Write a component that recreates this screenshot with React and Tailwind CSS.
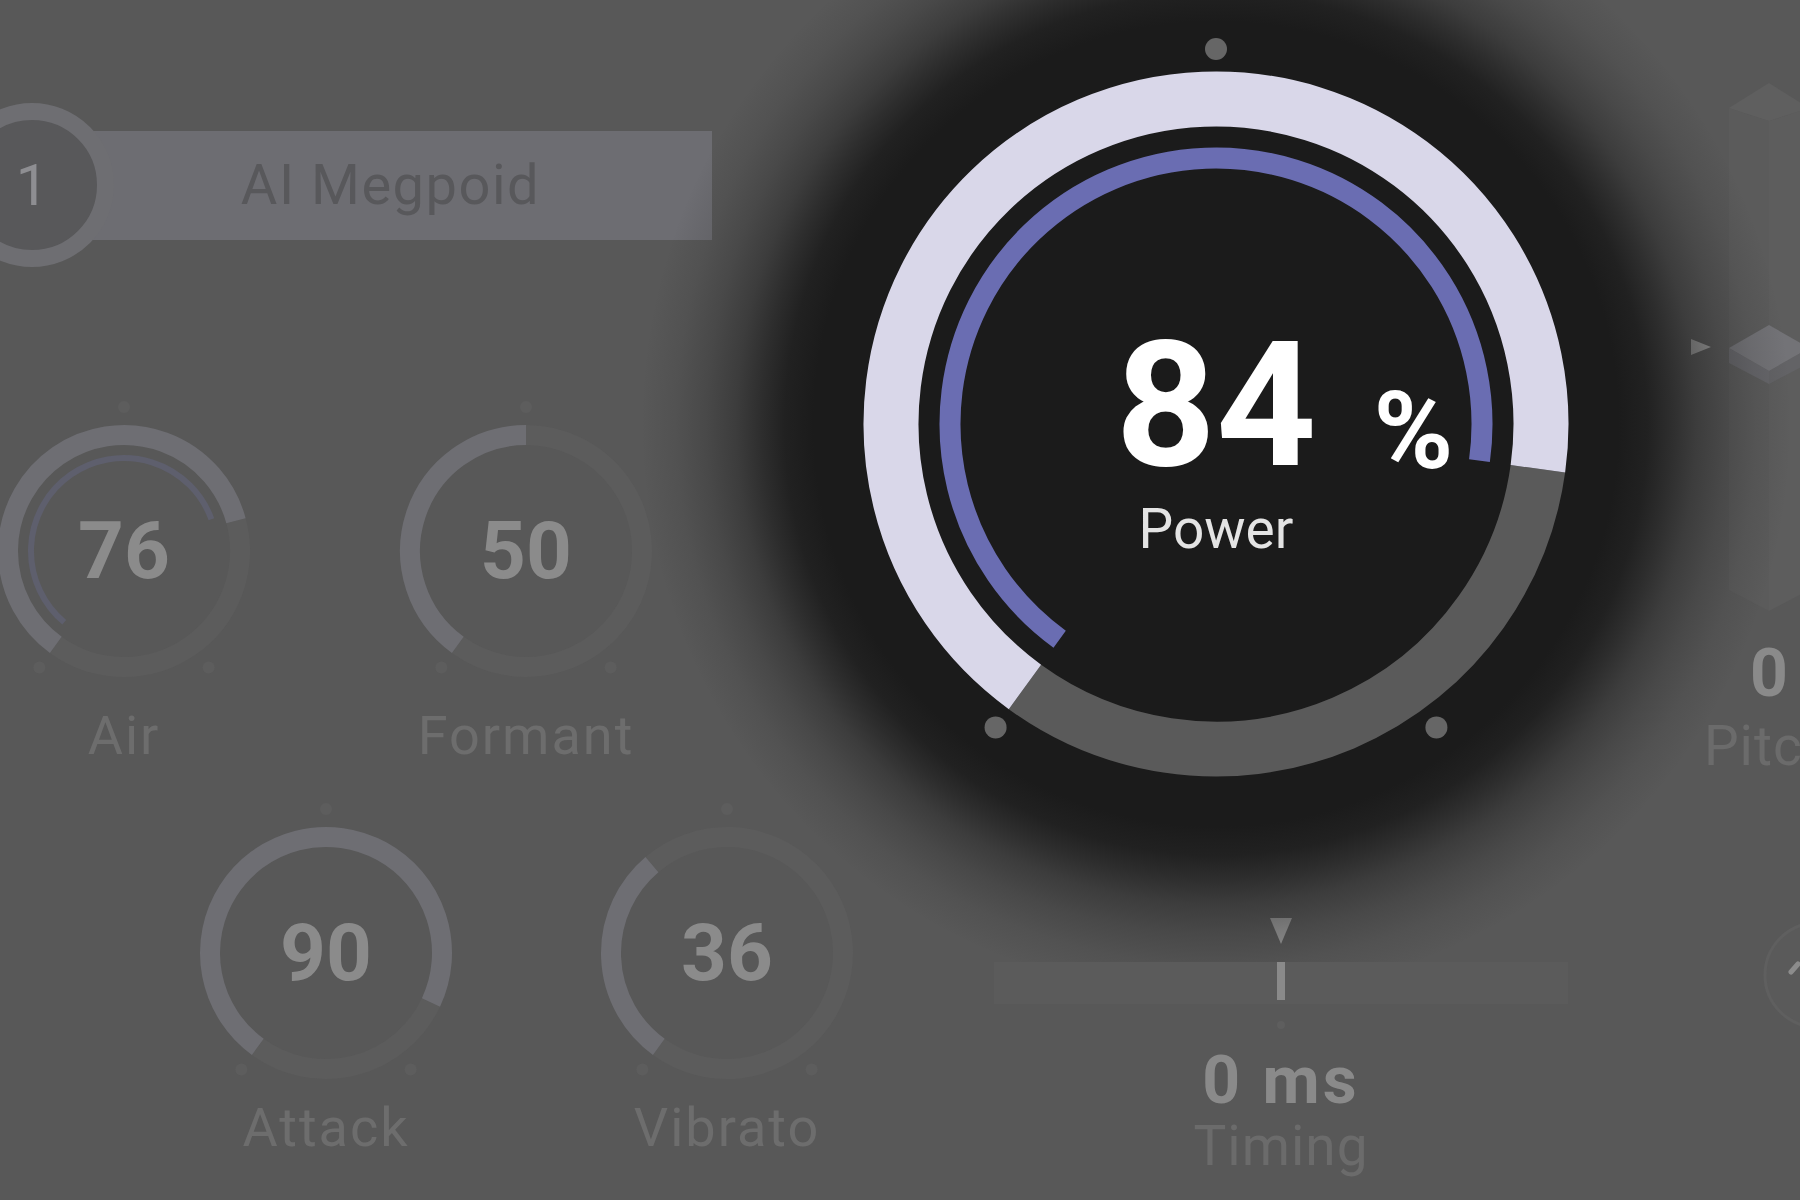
const pt = (c, r, a) => {
  const t = (a * Math.PI) / 180;
  return [c + r * Math.sin(t), c - r * Math.cos(t)];
};

const arc = (c, r, a0, a1) => {
  const [x0, y0] = pt(c, r, a0);
  const [x1, y1] = pt(c, r, a1);
  const large = a1 - a0 > 180 ? 1 : 0;
  return `M ${x0} ${y0} A ${r} ${r} 0 ${large} 1 ${x1} ${y1}`;
};

function SmallKnob({ value, label, inner, labelGap }) {
  const c = 150;
  const end = -144 + 2.88 * value;
  return (
    <div className="flex w-[300px] shrink-0 flex-col items-center">
      <div className="relative h-[300px] w-[300px]">
        <svg width="300" height="300" className="absolute inset-0">
          <path d={arc(c, 116, end, 216)} stroke="#5c5c5c" strokeWidth="20" fill="none" />
          <path d={arc(c, 116, -144, end)} stroke="#6e6e73" strokeWidth="20" fill="none" />
          {inner && <path d={arc(c, 93, -140, 70)} stroke="#5e5f6d" strokeWidth="6" fill="none" />}
          {[0, 144, 216].map((a) => {
            const [x, y] = pt(c, 144, a);
            return <circle key={a} cx={x} cy={y} r="6" fill="#5d5d5d" />;
          })}
        </svg>
        <div className="absolute inset-0 flex items-center justify-center text-[80px] font-bold leading-none text-[#8b8b8b]">
          {value}
        </div>
      </div>
      <div className="text-[54px] leading-none tracking-[2px] text-[#6d6d6d]" style={{ marginTop: labelGap }}>
        {label}
      </div>
    </div>
  );
}

function PowerKnob({ value }) {
  const c = 400;
  const end = -144 + 2.88 * value;
  return (
    <div className="relative mt-[24px] h-[800px] w-[800px] shrink-0">
      {/* soft dark halo behind the knob */}
      <div className="absolute left-[-175px] top-[-175px] h-[1150px] w-[1150px] bg-[radial-gradient(closest-side,#1b1b1b_70%,rgba(27,27,27,0.9)_75%,rgba(27,27,27,0.7)_79%,rgba(27,27,27,0.45)_83.5%,rgba(27,27,27,0.25)_88.7%,rgba(27,27,27,0.1)_94%,rgba(27,27,27,0)_100%)]" />
      <svg width="800" height="800" className="absolute inset-0">
        <path d={arc(c, 325, end, 216)} stroke="#5a5a5a" strokeWidth="55" fill="none" />
        <path d={arc(c, 325, -144, end)} stroke="#d9d7e9" strokeWidth="55" fill="none" />
        <path d={arc(c, 266, -144, end)} stroke="#6a6db2" strokeWidth="21" fill="none" />
        {[0, 144, 216].map((a) => {
          const [x, y] = pt(c, 375, a);
          return <circle key={a} cx={x} cy={y} r="11" fill="#666666" />;
        })}
      </svg>
      <div className="absolute inset-x-0 top-[294px] flex flex-col items-center">
        <div className="relative text-[175px] font-bold leading-none text-white">
          {value}
          <span className="absolute bottom-[8px] left-full ml-[57px] text-[108px]">%</span>
        </div>
        <div className="mt-[9px] text-[55px] leading-none text-[#e4e4e4]">Power</div>
      </div>
    </div>
  );
}

function TimingSlider() {
  return (
    <div className="ml-[178px] flex w-[574px] shrink-0 flex-col items-center self-start">
      <svg width="22" height="26" className="mt-[94px]">
        <polygon points="0,0 22,0 11,26" fill="#9a9a9a" />
      </svg>
      <div className="relative mt-[18px] h-[42px] w-full bg-[#5b5b5b]">
        <div className="absolute left-1/2 top-0 h-[38px] w-[8px] -translate-x-1/2 bg-[#8a8a8a]" />
      </div>
      <div className="mt-[17px] h-[8px] w-[8px] rounded-full bg-[#5e5e5e]" />
      <div className="mt-[19px] text-[66px] font-bold leading-none tracking-[3px] text-[#8a8a8a]">0 ms</div>
      <div className="mt-[5px] text-[55px] leading-none tracking-[1px] text-[#6b6b6b]">Timing</div>
    </div>
  );
}

function PitchFader() {
  return (
    <div className="ml-[72px] mt-[82px] flex w-[162px] shrink-0 flex-col items-center">
      <svg width="122" height="532" className="self-start">
        <polygon points="41,26 81,39 81,529 41,508" fill="#5b5b5b" />
        <polygon points="81,39 121,26 121,508 81,529" fill="#5d5d5d" />
        <polygon points="81,1 121,26 81,39 41,26" fill="#5f5f5f" />
        <polygon points="41,266 81,289 81,302 41,281" fill="#66666a" />
        <polygon points="81,289 121,266 121,281 81,302" fill="#636366" />
        <polygon points="81,243 121,266 81,289 41,266" fill="#737377" />
        <polygon points="3,257 23,265 3,273" fill="#a0a0a0" />
      </svg>
      <div className="mt-[27px] text-[66px] font-bold leading-none text-[#8a8a8a]">0</div>
      <div className="mt-[12px] text-[55px] leading-none tracking-[1px] text-[#6b6b6b]">Pitch</div>
      <svg width="120" height="120" className="ml-[69px] mt-[141px] self-start">
        <circle cx="60" cy="60" r="52" fill="#5a5a5a" stroke="#5f5f5f" strokeWidth="3" />
        <path d="M 34 57 L 41 49" stroke="#8c8c8c" strokeWidth="5" strokeLinecap="round" />
      </svg>
    </div>
  );
}

export default function App() {
  return (
    <div className="flex h-[1200px] w-[1800px] overflow-hidden bg-[#585858] font-['Roboto',sans-serif]">
      <div className="flex w-[816px] shrink-0 flex-col">
        <div className="ml-[-50px] mt-[103px] flex items-center">
          <div className="relative z-10 flex h-[164px] w-[164px] shrink-0 items-center justify-center rounded-full border-[17px] border-[#6e6e72] bg-[#58585a] text-[58px] leading-none text-[#8e8e92]">
            1
          </div>
          <div className="ml-[-45px] flex h-[109px] w-[643px] shrink-0 items-center justify-center bg-[#6d6d72] text-[56px] leading-none tracking-[1.5px] text-[#58585b]">
            AI Megpoid
          </div>
        </div>
        <div className="ml-[-26px] mt-[134px] flex gap-[102px]">
          <SmallKnob value={76} label="Air" inner labelGap={8} />
          <SmallKnob value={50} label="Formant" labelGap={8} />
        </div>
        <div className="ml-[176px] mt-[40px] flex gap-[101px]">
          <SmallKnob value={90} label="Attack" labelGap={-2} />
          <SmallKnob value={36} label="Vibrato" labelGap={-2} />
        </div>
      </div>
      <div className="flex w-[800px] shrink-0 flex-col items-center">
        <PowerKnob value={84} />
        <TimingSlider />
      </div>
      <PitchFader />
    </div>
  );
}
